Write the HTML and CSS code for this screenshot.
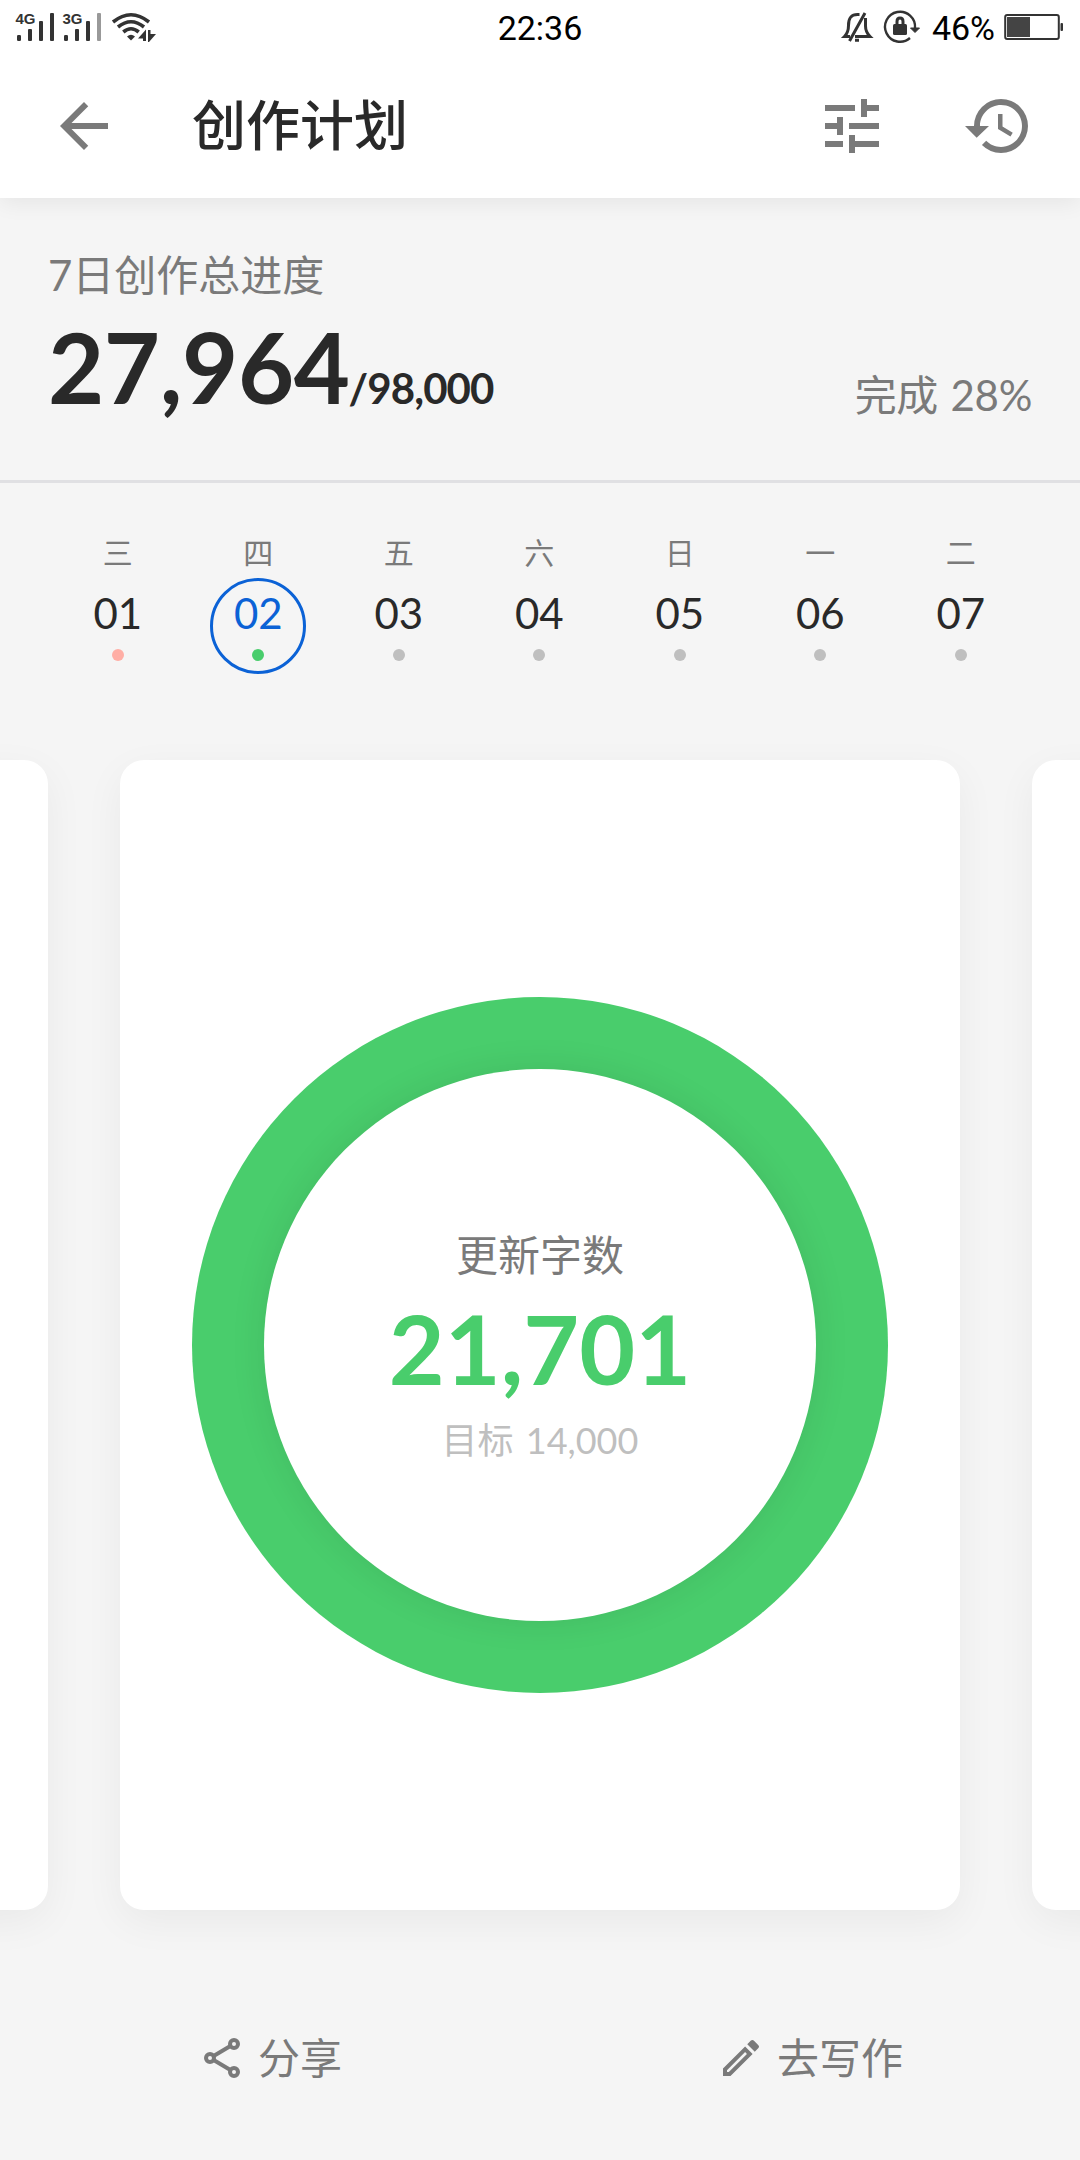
FILE: index.html
```html
<!DOCTYPE html>
<html lang="zh-CN">
<head>
<meta charset="utf-8">
<title>创作计划</title>
<link rel="stylesheet" href="styles.css">
</head>
<body>
<div class="screen">
  <header class="top">
    <div class="status">
      <svg class="signals" width="160" height="56" viewBox="0 0 160 56" fill="#333">
        <g class="net"><text x="15.500" y="24">4G</text><text x="62.500" y="24">3G</text></g>
        <rect x="17" y="35" width="4" height="6" rx="1.200"/><rect x="28" y="29" width="4" height="12" rx="1"/><rect x="39" y="21" width="4" height="20" rx="1"/><rect x="50" y="13" width="4" height="28" rx="1"/>
        <rect x="64" y="35" width="4" height="6" rx="1.200"/><rect x="75" y="29" width="4" height="12" rx="1"/><rect x="86" y="21" width="4" height="20" rx="1"/><rect x="97" y="13" width="4" height="28" rx="1" fill="#999"/>
        <g fill="none" stroke="#333" stroke-width="3.600"><path d="M113 22Q131 7.500 149 22"/><path d="M118 27Q131 16.500 144 27"/><path d="M123.300 32Q131 25.500 138.700 32"/></g>
        <path d="M127 36.500Q131 33 135 36.500L131 40.500z"/>
        <path d="M138 38.500l8-9V41h-3v-2.500zM148 30h2.500v4h5.500l-7 8h-1z"/>
      </svg>
      <span class="clock">22:36</span>
      <div class="indicators">
        <svg width="98" height="56" viewBox="0 0 98 56" fill="none" stroke="#333" stroke-width="3">
          <path d="M16 36.500H10.500c3-3 4-6 4-11 0-7 2-11 9-11h2M31.500 18v8c0 5 2 8 4.500 10.500H21M31 13L15.500 41M21 40.300h4"/>
          <path d="M81 28A15 15 0 1 0 76 38" stroke-width="2.400"/>
          <path d="M76.500 28h9L81 32.500z" fill="#333" stroke-width="1"/>
          <rect x="59" y="24" width="14" height="11" rx="1.500" fill="#333" stroke="none"/>
          <path d="M63 25v-3.500q0-3.500 3-3.500t3 3.500v3.500"/>
        </svg>
        <span class="percent">46%</span>
        <svg class="battery" width="62" height="56" viewBox="0 0 62 56"><rect x="2.200" y="15" width="53.600" height="24" rx="2" fill="none" stroke="#333" stroke-width="2"/><rect x="4" y="17" width="23" height="20" fill="#444"/><rect x="57.500" y="23" width="2.500" height="8" rx="1" fill="#333"/></svg>
      </div>
    </div>
    <div class="appbar">
      <svg class="back" width="72" height="72" viewBox="0 0 24 24" fill="#7a7a7a"><path d="M20 11H7.830l5.590-5.590L12 4l-8 8 8 8 1.410-1.410L7.830 13H20v-2z"/></svg>
      <h1 class="title">创作计划</h1>
      <svg class="tune" width="72" height="72" viewBox="0 0 24 24" fill="#7a7a7a"><path d="M3 17v2h6v-2H3zM3 5v2h10V5H3zm10 16v-2h8v-2h-8v-2h-2v6h2zM7 9v2H3v2h4v2h2V9H7zm14 4v-2H11v2h10zm-6-4h2V7h4V5h-4V3h-2v6z"/></svg>
      <svg class="history" width="72" height="72" viewBox="0 0 24 24" fill="#7a7a7a"><path d="M13 3a9 9 0 0 0-9 9H1l3.890 3.890L9 12H6c0-3.870 3.130-7 7-7s7 3.130 7 7-3.130 7-7 7c-1.930 0-3.680-.79-4.940-2.060l-1.420 1.420A8.950 8.950 0 0 0 13 21a9 9 0 0 0 0-18zm-1 5v5l4.150 2.490.77-1.280-3.420-2.030V8z"/></svg>
    </div>
  </header>

  <section class="summary">
    <div class="caption">7日创作总进度</div>
    <div class="totals">
      <div class="figures"><span class="total">27,964</span><span class="quota">/98,000</span></div>
      <div class="done">完成 28%</div>
    </div>
  </section>

  <section class="week">
    <div class="day missed"><span class="name">三</span><span class="date">01</span></div>
    <div class="day active"><span class="name">四</span><span class="date">02</span></div>
    <div class="day"><span class="name">五</span><span class="date">03</span></div>
    <div class="day"><span class="name">六</span><span class="date">04</span></div>
    <div class="day"><span class="name">日</span><span class="date">05</span></div>
    <div class="day"><span class="name">一</span><span class="date">06</span></div>
    <div class="day"><span class="name">二</span><span class="date">07</span></div>
  </section>

  <main class="cards">
    <div class="card"></div>
    <div class="card">
      <div class="ring">
        <div class="disc">
          <span class="label">更新字数</span>
          <span class="count">21,701</span>
          <span class="goal">目标 14,000</span>
        </div>
      </div>
    </div>
    <div class="card"></div>
  </main>

  <footer class="actions">
    <div class="action">
      <svg width="48" height="48" viewBox="0 0 24 24" fill="none" stroke="#7a7a7a" stroke-width="2"><circle cx="18" cy="5" r="2"/><circle cx="6" cy="12" r="2"/><circle cx="18" cy="19" r="2"/><path d="M7.800 11l8.400-5M7.800 13l8.400 5"/></svg>
      <span class="text">分享</span>
    </div>
    <div class="action">
      <svg width="48" height="48" viewBox="0 0 24 24" fill="#7a7a7a"><path d="M14.060 9.020l.92.920L5.920 19H5v-.92l9.060-9.060M17.660 3c-.25 0-.51.1-.7.290l-1.830 1.830 3.750 3.750 1.830-1.830a.996.996 0 0 0 0-1.410l-2.340-2.340c-.2-.2-.45-.29-.71-.29zm-3.600 3.190L3 17.250V21h3.750L17.810 9.940l-3.750-3.750z"/></svg>
      <span class="text">去写作</span>
    </div>
  </footer>
</div>
</body>
</html>
```
FILE: styles.css
```css
*, *::before, *::after { box-sizing: border-box; }
body { margin: 0; }
.screen {
  width: 1080px;
  height: 2160px;
  overflow: hidden;
  display: flex;
  flex-direction: column;
  background: #f5f5f5;
  color: #292929;
  font-family: Lato, "Noto Sans CJK SC", sans-serif;
}
.screen > * { flex: none; }
svg { display: block; flex: none; }

.top {
  height: 198px;
  background: #fff;
  box-shadow: 0 4px 22px rgba(0, 0, 0, .07);
}
.status {
  height: 56px;
  display: grid;
  grid-template-columns: 1fr auto 1fr;
  color: #000;
  font: 34px/56px Roboto, sans-serif;
}
.net { font: bold 15px "Liberation Sans", sans-serif; }
.indicators { display: flex; justify-content: flex-end; padding-right: 15px; }
.percent { margin-right: 8px; }

.appbar {
  height: 142px;
  display: flex;
  align-items: center;
  padding: 0 46px 2px 48px;
}
.title {
  flex: 1;
  margin: 0 0 0 72px;
  font-size: 54px;
  line-height: 80px;
  font-weight: 500;
}
.history { margin-left: 74px; }

.summary {
  height: 285px;
  padding: 47px 48px 0;
  border-bottom: 3px solid #e0e0e3;
}
.caption, .done { font-size: 42px; line-height: 60px; color: #7a7a7a; }
.totals { display: flex; justify-content: space-between; align-items: flex-start; margin-top: 2px; }
.figures { display: flex; align-items: baseline; line-height: 120px; font-weight: 700; }
.total { font-size: 97px; letter-spacing: -.4px; }
.quota { margin-left: -1px; font-size: 42px; letter-spacing: -.9px; }
.done { margin-top: 58px; word-spacing: 2px; letter-spacing: -.3px; }

.week {
  height: 277px;
  padding: 48px 47.500px 0;
  display: grid;
  grid-template-columns: repeat(7, 140.500px);
}
.day { position: relative; display: flex; flex-direction: column; align-items: center; }
.name { font-size: 30px; line-height: 42px; color: #7a7a7a; }
.date { margin-top: 14px; font-size: 42px; line-height: 52px; }
.day::after {
  content: "";
  width: 12px;
  height: 12px;
  margin-top: 10px;
  border-radius: 50%;
  background: #bfbfbf;
}
.missed::after { background: #ffaea5; }
.active::after { background: #49cd6c; }
.active .date { color: #0b62d6; }
.active::before {
  content: "";
  position: absolute;
  top: 47px;
  width: 96px;
  height: 96px;
  border: 3px solid #0b62d6;
  border-radius: 50%;
}

.cards { height: 1150px; display: flex; justify-content: center; gap: 72px; }
.card {
  flex: none;
  width: 840px;
  display: flex;
  align-items: center;
  justify-content: center;
  background: #fff;
  border-radius: 24px;
  box-shadow: 0 12px 40px rgba(0, 0, 0, .05);
}
.ring {
  width: 696px;
  height: 696px;
  margin-top: 20px;
  padding: 72px;
  background: #49cd6c;
  border-radius: 50%;
}
.disc {
  height: 552px;
  padding-top: 156px;
  display: flex;
  flex-direction: column;
  align-items: center;
  background: #fff;
  border-radius: 50%;
  box-shadow: 0 0 36px rgba(0, 0, 0, .09);
}
.label { font-size: 42px; line-height: 60px; color: #7a7a7a; }
.count { margin-top: 3px; font-size: 96.500px; line-height: 120px; font-weight: 700; color: #49cd6c; }
.goal { margin-top: 2px; font-size: 36px; line-height: 60px; color: #bfbfbf; word-spacing: 3px; }

.actions { height: 250px; display: grid; grid-template-columns: 1fr 1fr; color: #7a7a7a; font-size: 42px; }
.action { display: flex; align-items: center; justify-content: center; gap: 12px; padding-top: 46px; }
.text { line-height: 60px; }
```
